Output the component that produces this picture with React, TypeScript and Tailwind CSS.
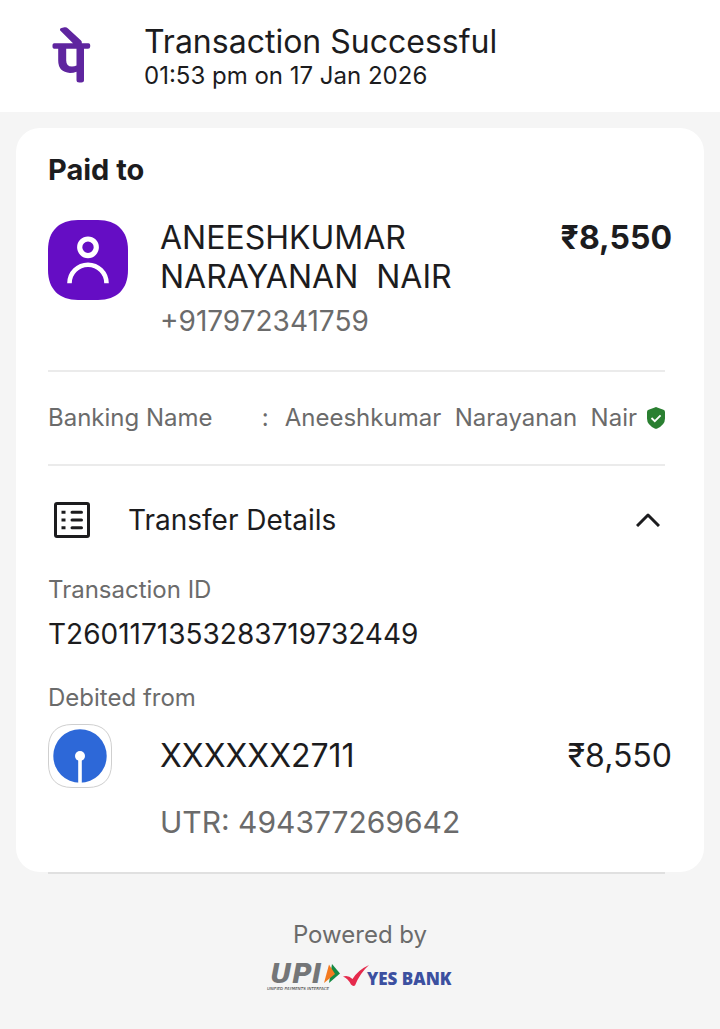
import { useState } from "react";

function PeMark() {
  return (
    <svg viewBox="0 0 40 58" className="h-[58px] w-10" aria-label="PhonePe" role="img">
      <path
        fill="#5f259f"
        d="M8 3.200Q7.400 1.600 9.500 1L12.500 .3Q14.500 0 16 1.500L29 13.500Q30.200 14.700 29.800 16.300H36.500Q38.200 16.300 38.200 18V19.500Q38.200 21.700 36 21.700H32V53.500Q32 55.500 29.500 55.500H27.200Q24.500 55.500 24.500 53V44.800Q21.500 46 18 46Q6.200 45 6.200 33.500V21.700H2.200Q.5 21.700 .5 20V18Q.5 16.300 2.200 16.300H21ZM14.200 21.700V33.500Q14.200 39.500 20 39.500Q22.500 39.500 24.500 38.500V21.700Z"
        fillRule="evenodd"
      />
    </svg>
  );
}

function Avatar() {
  return (
    <svg viewBox="0 0 80 80" className="mt-[2px] size-20 shrink-0" aria-hidden="true">
      <path
        fill="#650dc4"
        d="M30 0H50C69 0 80 11 80 30V50C80 69 69 80 50 80H30C11 80 0 69 0 50V30C0 11 11 0 30 0Z"
      />
      <circle cx="40" cy="27.300" r="8.300" fill="none" stroke="#fff" strokeWidth="5.200" />
      <path d="M21.500 63.300A18.500 18.500 0 0 1 58.500 63.300" fill="none" stroke="#fff" strokeWidth="4.600" />
    </svg>
  );
}

function VerifiedShield() {
  return (
    <svg viewBox="1 0 18 22" className="h-[22px] w-[18px] shrink-0" role="img" aria-label="Verified">
      <path
        fill="#2a7f31"
        d="M10 0Q10.600 0 11.200 .4L17.400 2.800Q19 3.400 19 5V11.500Q19 18 10.800 21.700Q10 22 9.200 21.700Q1 18 1 11.500V5Q1 3.400 2.600 2.800L8.800 .4Q9.400 0 10 0Z"
      />
      <path d="M5.500 11L8.800 14.200L14.600 8.400" fill="none" stroke="#fff" strokeWidth="1.800" />
    </svg>
  );
}

function DetailsIcon() {
  return (
    <svg viewBox="0 0 36 36" className="size-9 shrink-0" fill="none" stroke="#1c1c1e" aria-hidden="true">
      <rect x="1.500" y="1.500" width="33" height="33" rx="1.500" strokeWidth="3" />
      <path d="M7.500 10.200H11.500M7.500 18H11.500M7.500 25.800H11.500" strokeWidth="3" />
      <path d="M18 10.200H27.500M18 18H27.500M18 25.800H27.500" strokeWidth="3" strokeLinecap="round" />
    </svg>
  );
}

function SbiLogo() {
  return (
    <svg viewBox="0 0 64 64" className="size-16 shrink-0" role="img" aria-label="State Bank of India">
      <path
        d="M24 .5H40C55 .5 63.500 9 63.500 24V40C63.500 55 55 63.500 40 63.500H24C9 63.500 .5 55 .5 40V24C.5 9 9 .5 24 .5Z"
        fill="#fff"
        stroke="#cfcfcf"
      />
      <circle cx="32" cy="32" r="26.700" fill="#2d68d8" />
      <circle cx="32" cy="32" r="5" fill="#fff" />
      <path d="M32 32V59.500" stroke="#fff" strokeWidth="3.600" />
    </svg>
  );
}

function UpiLogo() {
  return (
    <svg viewBox="0 0 74 30" className="h-[30px] w-[74px] overflow-visible" role="img" aria-label="UPI">
      <text x="4" y="20" fontFamily="DejaVu Sans" fontSize="27" fontStyle="italic" fontWeight="700" fill="#747678">
        UPI
      </text>
      <path d="M66 1L74 10.500L63 20Z" fill="#148a43" />
      <path d="M63 1.500L69 11L58 20Z" fill="#f37a20" />
      <text x="1" y="27" fontFamily="DejaVu Sans" fontSize="4" fontStyle="italic" fill="#2c2c2c">
        UNIFIED PAYMENTS INTERFACE
      </text>
    </svg>
  );
}

function YesBankLogo() {
  return (
    <svg viewBox="0 0 112 30" className="h-[30px] w-28 overflow-visible" role="img" aria-label="YES BANK">
      <path d="M1 13.500Q6 11.500 10.500 16Q16 7 27 2Q18 10 13 22.500Q11 23.800 9 21.500Q6 15.500 1 13.500Z" fill="#e52a4c" />
      <text x="25" y="22" fontFamily="Open Sans" fontSize="17" fontWeight="800" fill="#3c50a0">
        YES BANK
      </text>
    </svg>
  );
}

export default function App() {
  const [open, setOpen] = useState(true);

  return (
    <div className="min-h-screen bg-[#f5f5f5] font-['Inter',sans-serif] text-[#1c1c1e]">
      <header className="flex h-28 items-center gap-[52px] bg-white pl-[52px]">
        <PeMark />
        <div className="pt-[2px]">
          <h1 className="text-[32px] leading-[38px]">Transaction Successful</h1>
          <p className="text-[24px] leading-[30px]">01:53 pm on 17 Jan 2026</p>
        </div>
      </header>

      <main className="px-4 pt-4">
        <section className="rounded-3xl bg-white px-8 pt-6 pb-[30px]">
          <h2 className="text-[29px] leading-9 font-bold">Paid to</h2>

          <div className="mt-[30px] flex items-start">
            <Avatar />
            <div className="ml-8">
              <p className="w-[320px] text-[32px] leading-[39px] whitespace-pre-wrap">
                {"ANEESHKUMAR NARAYANAN  NAIR"}
              </p>
              <p className="mt-2 text-[28px] leading-[34px] text-[#6b6b6b]">+917972341759</p>
            </div>
            <p className="ml-auto text-[32px] leading-[39px] font-bold">₹8,550</p>
          </div>

          <div className="mt-8 mr-[7px] flex items-center border-y-2 border-[#ebebeb] py-[30px] text-[24px] leading-8 text-[#6b6b6b]">
            <span>Banking Name</span>
            <span className="ml-auto">:</span>
            <span className="ml-4 whitespace-pre">{"Aneeshkumar  Narayanan  Nair"}</span>
            <span className="ml-[10px]">
              <VerifiedShield />
            </span>
          </div>

          <button
            type="button"
            aria-expanded={open}
            onClick={() => setOpen(!open)}
            className="mt-9 flex w-full items-center pr-3 pl-[6px] text-left text-[28px] leading-9"
          >
            <DetailsIcon />
            <span className="ml-[38px]">Transfer Details</span>
            <svg viewBox="0 0 24 14" className="ml-auto h-[14px] w-6" fill="none" stroke="#1c1c1e" strokeWidth="3" aria-hidden="true">
              <path d={open ? "M1 13L12 2L23 13" : "M1 1L12 12L23 1"} strokeLinejoin="round" />
            </svg>
          </button>

          {open && (
            <div className="pt-9">
              <p className="text-[24px] leading-8 text-[#6b6b6b]">Transaction ID</p>
              <p className="mt-2 text-[28px] leading-10">T2601171353283719732449</p>
              <p className="mt-7 text-[24px] leading-8 text-[#6b6b6b]">Debited from</p>
              <div className="mt-[10px] flex items-center">
                <SbiLogo />
                <p className="ml-12 text-[32px] leading-10">XXXXXX2711</p>
                <p className="ml-auto text-[32px] leading-10">₹8,550</p>
              </div>
              <p className="mt-[14px] ml-28 text-[30px] leading-10 text-[#6b6b6b]">UTR: 494377269642</p>
            </div>
          )}
        </section>
        <div className="mr-[39px] ml-8 h-[2px] bg-[#e0e0e0]" />
      </main>

      <footer className="flex flex-col items-center pt-[45px] pb-9">
        <p className="text-[24px] leading-8 text-[#6b6b6b]">Powered by</p>
        <div className="mt-3 flex items-center gap-[2px]">
          <UpiLogo />
          <YesBankLogo />
        </div>
      </footer>
    </div>
  );
}
